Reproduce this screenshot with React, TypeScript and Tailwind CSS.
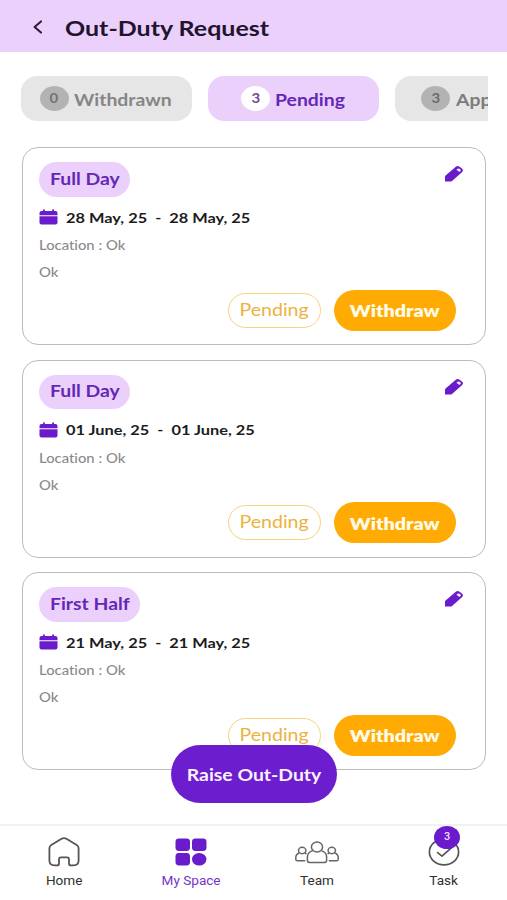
import * as React from "react";

const requests = [
  { type: "Full Day", from: "28 May, 25", to: "28 May, 25", chip: "w-[91px]" },
  { type: "Full Day", from: "01 June, 25", to: "01 June, 25", chip: "w-[91px]" },
  { type: "First Half", from: "21 May, 25", to: "21 May, 25", chip: "w-[101px]" },
];

const PencilIcon = () => (
  <svg width="20" height="18" viewBox="0 0 20 18" className="shrink-0">
    <path d="M1 16.2 V11.6 Q1 11 1.6 10.5 L11.8 1.8 Q13.6 0.4 15.6 1.8 L18.2 3.8 Q20 5.4 18.2 7 L8 15.9 Q7.4 16.5 6.6 16.5 H1.6 Q1 16.6 1 16.2Z" fill="#6a1bcb" />
    <path d="M13.6 3.8 Q14.6 3 15.5 3.8 L16.5 4.6 Q17.4 5.3 16.5 6.1 L15.4 7 L12.4 4.8Z" fill="#f3e6ff" />
  </svg>
);

const CalendarIcon = () => (
  <svg width="19" height="16" viewBox="0 0 19 16" className="shrink-0">
    <path d="M0.5 6.3 V4 Q0.5 2 2.5 2 H4 V0.8 Q4 0.2 4.9 0.2 Q5.8 0.2 5.8 0.8 V2 H13.2 V0.8 Q13.2 0.2 14.1 0.2 Q15 0.2 15 0.8 V2 H16.5 Q18.5 2 18.5 4 V6.3Z" fill="#6a1bcb" />
    <path d="M0.5 7.2 H18.5 V13.6 Q18.5 15.5 16.5 15.5 H2.5 Q0.5 15.5 0.5 13.6Z" fill="#6a1bcb" />
  </svg>
);

const HomeIcon = () => (
  <svg width="32" height="30" viewBox="0 0 32 30" fill="none" stroke="#555" strokeWidth="1.8" strokeLinejoin="round">
    <path d="M13.6 1.8 Q16 0.4 18.4 1.8 L28.7 8 Q30.6 9.2 30.6 11.2 V23.6 Q30.6 28.4 25.6 28.4 H23 Q21 28.4 21 26.4 V22.4 Q21 20.4 19 20.4 H13 Q11 20.4 11 22.4 V26.4 Q11 28.4 9 28.4 H6.4 Q1.4 28.4 1.4 23.6 V11.2 Q1.4 9.2 3.3 8Z" />
  </svg>
);

const SpaceIcon = () => (
  <svg width="32" height="28" viewBox="0 0 32 28" fill="#6a1bcb">
    <rect x="0.5" y="0.5" width="14.5" height="12.5" rx="3.4" />
    <rect x="17" y="0.5" width="14.5" height="12.5" rx="3.4" />
    <rect x="0.5" y="15" width="14.5" height="12.5" rx="3.4" />
    <ellipse cx="24.2" cy="21.2" rx="7.2" ry="6.3" />
  </svg>
);

const TeamIcon = () => (
  <svg width="44" height="23" viewBox="0 0 44 23" fill="none" stroke="#666" strokeWidth="1.5" strokeLinejoin="round">
    <ellipse cx="22" cy="6" rx="5.6" ry="5" />
    <path d="M17.6 9.6 Q12.4 11.4 12.4 16 V19.6 Q12.4 21.4 14.4 21.4 H29.6 Q31.6 21.4 31.6 19.6 V16 Q31.6 11.4 26.4 9.6" />
    <ellipse cx="7.2" cy="9.5" rx="3.7" ry="3.2" />
    <path d="M10.2 19.8 H2.4 Q0.8 19.8 0.8 18.2 V16.4 Q0.8 13.2 4.4 12 M9.8 12 Q10.8 12.4 11.4 13" />
    <ellipse cx="36.8" cy="9.5" rx="3.7" ry="3.2" />
    <path d="M33.8 19.8 H41.6 Q43.2 19.8 43.2 18.2 V16.4 Q43.2 13.2 39.6 12 M34.2 12 Q33.2 12.4 32.6 13" />
  </svg>
);

const TaskIcon = () => (
  <svg width="32" height="28" viewBox="0 0 32 28" fill="none" stroke="#555" strokeWidth="1.7" strokeLinecap="round" strokeLinejoin="round">
    <ellipse cx="16" cy="14" rx="14.6" ry="12.8" />
    <path d="M9.6 14.6 L14 18.2 L23.6 9.6" />
  </svg>
);

const RequestCard = ({ request }) => (
  <div className="h-[198px] shrink-0 rounded-[16px] border-[1.5px] border-[#bcbcbc] pt-[14px] pl-[16px]">
    <div className="flex justify-between pr-[21px]">
      <div className={`flex h-[34.5px] items-center rounded-full bg-[#ebd0fc] pb-[1px] pl-[11px] ${request.chip}`}>
        <span className="origin-left scale-x-[1.14] whitespace-nowrap text-[17px] leading-[34px] font-bold text-[#6527b5]">{request.type}</span>
      </div>
      <div className="pt-[3px]">
        <PencilIcon />
      </div>
    </div>
    <div className="mt-[11.5px] flex h-[18px] items-center gap-[8px]">
      <CalendarIcon />
      <span className="origin-left scale-x-[1.17] pt-px text-[14px] leading-[18px] font-bold whitespace-pre text-[#1c1c1c]">
        {request.from + "  -  " + request.to}
      </span>
    </div>
    <p className="mt-[10px] w-fit origin-left scale-x-[1.14] text-[13px] leading-[18px] font-medium text-[#8a8a8a]">Location : Ok</p>
    <p className="mt-[9px] w-fit origin-left scale-x-[1.14] text-[13px] leading-[18px] font-medium text-[#8a8a8a]">Ok</p>
    <div className="mt-[8.5px] flex items-center justify-end gap-[13px] pr-[29.5px]">
      <div className="flex h-[35px] w-[93px] items-center justify-center rounded-full border border-[#f7d37c] pb-[1px]">
        <span className="scale-x-[1.15] text-[17px] leading-[20px] text-[#ecb23e]">Pending</span>
      </div>
      <button className="flex h-[41px] w-[122px] items-center justify-center rounded-full bg-[#ffab03] pt-[2px]">
        <span className="scale-x-[1.16] text-[17px] font-extrabold text-[#fffbe8]">Withdraw</span>
      </button>
    </div>
  </div>
);

export default function App() {
  return (
    <div className="flex h-[900px] w-[507px] flex-col overflow-hidden bg-white font-['Lato','Noto_Sans',sans-serif] [font-variant-ligatures:none]">
      <header className="flex h-[52px] shrink-0 items-center bg-[#ebd0fc] pt-[2px] pl-[32px]">
        <svg width="12" height="14" viewBox="0 0 12 14" fill="none" stroke="#2a1838" strokeWidth="2" strokeLinecap="round" strokeLinejoin="round">
          <path d="M9 1.4 L2.6 7 L9 12.6" />
        </svg>
        <h1 className="ml-[20.5px] origin-left scale-x-[1.19] pt-[2px] text-[21px] leading-[28px] font-bold whitespace-nowrap text-[#22142e]">Out-Duty Request</h1>
      </header>

      <div className="mr-[19px] ml-[20.5px] flex h-[95px] shrink-0 gap-[16px] overflow-hidden pt-[23.5px]">
        <div className="flex h-[45.5px] w-[171.5px] shrink-0 items-center rounded-[16px] bg-[#e6e6e6] pl-[19px]">
          <span className="flex h-[25px] w-[29px] items-center justify-center rounded-[50%] bg-[#b3b3b3] text-[13px] font-bold text-[#737373]"><span className="scale-x-[1.15]">0</span></span>
          <span className="ml-[5.5px] origin-left scale-x-[1.14] pt-[2px] text-[17px] font-bold text-[#858585]">Withdrawn</span>
        </div>
        <div className="flex h-[45.5px] w-[171px] shrink-0 items-center rounded-[16px] bg-[#ebd0fc] pl-[33px]">
          <span className="flex h-[25px] w-[29px] items-center justify-center rounded-[50%] bg-white text-[13px] font-bold text-[#6f4a96]"><span className="scale-x-[1.15]">3</span></span>
          <span className="ml-[5px] origin-left scale-x-[1.14] pt-[2px] text-[17px] font-bold text-[#6527b5]">Pending</span>
        </div>
        <div className="flex h-[45.5px] w-[171px] shrink-0 items-center rounded-[16px] bg-[#e6e6e6] pl-[26px]">
          <span className="flex h-[25px] w-[29px] items-center justify-center rounded-[50%] bg-[#b3b3b3] text-[13px] font-bold text-[#6b6b6b]"><span className="scale-x-[1.15]">3</span></span>
          <span className="ml-[5.5px] origin-left scale-x-[1.14] pt-[2px] text-[17px] font-bold text-[#7c7c7c]">Approved</span>
        </div>
      </div>

      <main className="relative flex min-h-0 flex-1 flex-col gap-[14.5px] pr-[21px] pl-[22px]">
        {requests.map((request, index) => (
          <RequestCard key={index} request={request} />
        ))}
        <button className="absolute top-[598px] left-[171px] flex h-[58px] w-[166px] items-center justify-center rounded-full bg-[#6c1dcd] pt-[2px]">
          <span className="scale-x-[1.14] text-[17px] font-bold whitespace-nowrap text-[#faf2ff]">Raise Out-Duty</span>
        </button>
      </main>

      <nav className="grid h-[76px] shrink-0 grid-cols-4 border-t-2 border-[#f1f1f1] bg-white pl-[1px] font-['Roboto',sans-serif] text-[12px] text-[#303030]">
        <div className="flex flex-col items-center">
          <div className="flex h-[48px] items-center pt-[4px]"><HomeIcon /></div>
          <span className="scale-x-[1.13] leading-[14px]">Home</span>
        </div>
        <div className="flex flex-col items-center text-[#7633c9]">
          <div className="flex h-[48px] items-center pt-[4px]"><SpaceIcon /></div>
          <span className="scale-x-[1.13] leading-[14px]">My Space</span>
        </div>
        <div className="flex flex-col items-center">
          <div className="flex h-[48px] items-center pt-[4px]"><TeamIcon /></div>
          <span className="scale-x-[1.13] leading-[14px]">Team</span>
        </div>
        <div className="flex flex-col items-center">
          <div className="relative flex h-[48px] items-center pt-[4px]">
            <TaskIcon />
            <span className="absolute top-0 left-[6.5px] flex h-[23px] w-[26px] items-center justify-center rounded-[50%] bg-[#6a1bcb] text-[11px] font-medium text-[#f0d9ff]">3</span>
          </div>
          <span className="scale-x-[1.13] leading-[14px]">Task</span>
        </div>
      </nav>
    </div>
  );
}
